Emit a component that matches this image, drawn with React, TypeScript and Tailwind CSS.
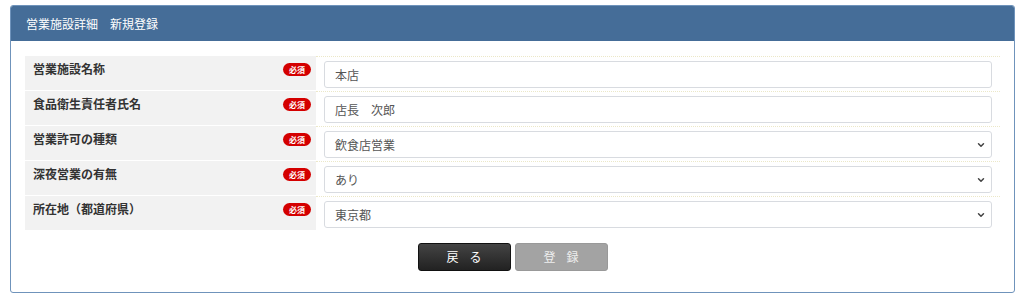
import React from "react";

const rows: { label: string; value: string; select: boolean }[] = [
  { label: "営業施設名称", value: "本店", select: false },
  { label: "食品衛生責任者氏名", value: "店長　次郎", select: false },
  { label: "営業許可の種類", value: "飲食店営業", select: true },
  { label: "深夜営業の有無", value: "あり", select: true },
  { label: "所在地（都道府県）", value: "東京都", select: true },
];

function Chevron() {
  return (
    <svg width="10" height="10" viewBox="0 0 10 10" className="absolute right-[5px] top-1/2 -translate-y-1/2">
      <path d="M2.5 3.8 L5 6.3 L7.5 3.8" fill="none" stroke="#444" strokeWidth="1.5" strokeLinecap="round" strokeLinejoin="round" />
    </svg>
  );
}

export default function App() {
  return (
    <div className="w-[1024px] h-[297px] bg-white pt-[5px] pl-[10px] pr-[9px]" style={{ fontFamily: '"Noto Sans CJK JP", "Noto Sans", sans-serif' }}>
      <div className="border border-[#6f93bb] rounded-[3px] h-[288px] flex flex-col overflow-hidden">
        <div className="h-[35px] bg-[#456d98] flex items-center pl-[15px] text-white text-[12px]">
          営業施設詳細　新規登録
        </div>
        <div className="px-[14px] pt-[15px] flex flex-col">
          {rows.map((r, i) => (
            <div key={i} className="flex h-[35px]">
              <div className="w-[291px] bg-[#f2f2f2] border-b border-white flex justify-between pl-[8px] pr-[5px] pt-[5px]">
                <span className="text-[12px] font-bold text-[#333] leading-[16px]">{r.label}</span>
                <span className="mt-[2px] h-[13px] px-[6px] rounded-full bg-[#d40000] text-white text-[8px] font-bold leading-[13px]">必須</span>
              </div>
              <div className="flex-1 border-t border-dotted border-[#ece8c8] px-[8px] pt-[4px]">
                <div className="relative h-[27px] border border-[#d8dbe0] rounded-[3px] flex items-center pl-[10px] text-[12px] text-[#555]">
                  {r.value}
                  {r.select && <Chevron />}
                </div>
              </div>
            </div>
          ))}
        </div>
        <div className="flex justify-center gap-[4px] mt-[12px]">
          <div className="w-[93px] h-[28px] rounded-[3px] border border-[#111] bg-gradient-to-b from-[#444] to-[#222] text-white text-[12px] flex items-center justify-center tracking-[11px] pl-[11px]">
            戻る
          </div>
          <div className="w-[93px] h-[28px] rounded-[3px] border border-[#999] bg-[#a3a3a3] text-[#eee] text-[12px] flex items-center justify-center tracking-[11px] pl-[11px]">
            登録
          </div>
        </div>
      </div>
    </div>
  );
}
